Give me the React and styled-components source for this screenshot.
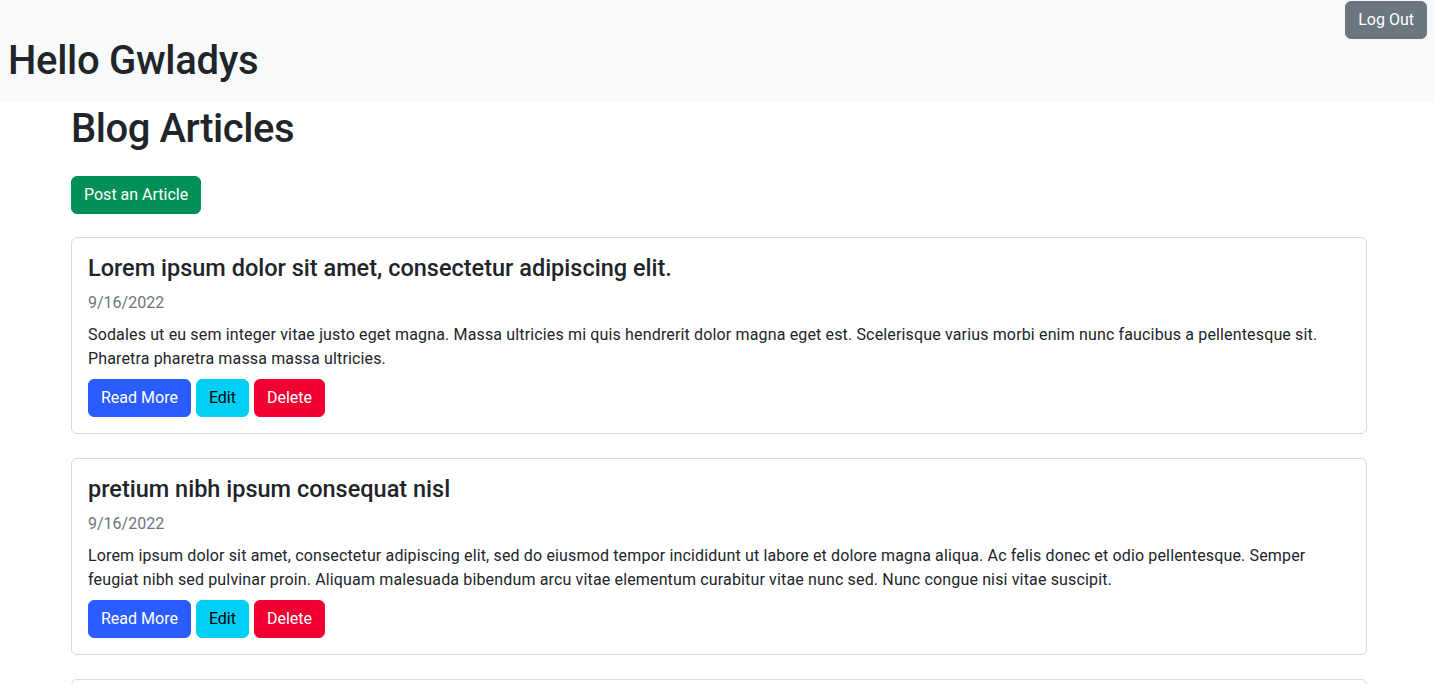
import React from 'react';
import styled, { createGlobalStyle } from 'styled-components';

const GlobalStyle = createGlobalStyle`
  * { box-sizing: border-box; }
  body {
    margin: 0;
    background: #fff;
    color: #212529;
    font-family: Roboto, "Liberation Sans", sans-serif;
    font-size: 16px;
    line-height: 1.5;
  }
`;

const Header = styled.header`
  display: flex;
  flex-direction: column;
  height: 102px;
  background-color: #f8f9fa;
`;

const HeaderBar = styled.div`
  display: flex;
  justify-content: flex-end;
  padding: 1px 7px 0 0;
`;

const Greeting = styled.h1`
  margin: -2px 0 0 8px;
  font-size: 40px;
  font-weight: 500;
  line-height: 1.2;
  letter-spacing: -0.3px;
`;

const Main = styled.main`
  padding: 0 67px 0 71px;
`;

const PageTitle = styled.h1`
  margin: 3px 0 23px;
  font-size: 40px;
  font-weight: 500;
  line-height: 1.2;
  letter-spacing: -0.45px;
`;

const colors = {
  primary: { bg: '#2a5cfe', fg: '#fff' },
  info: { bg: '#00cff5', fg: '#000' },
  danger: { bg: '#f20031', fg: '#fff' },
  success: { bg: '#008f56', fg: '#fff' },
  secondary: { bg: '#6b767f', fg: '#fff' },
};

const Button = styled.button`
  display: inline-block;
  height: 38px;
  padding: 0 12px;
  border: 1px solid ${(p) => colors[p.$variant].bg};
  border-radius: 6px;
  background-color: ${(p) => colors[p.$variant].bg};
  color: ${(p) => colors[p.$variant].fg};
  font-family: inherit;
  font-size: 16px;
  line-height: 24px;
  cursor: pointer;
`;

const CardList = styled.div`
  display: flex;
  flex-direction: column;
  gap: 24px;
  margin-top: 23px;
`;

const Card = styled.article`
  border: 1px solid #d9d9d9;
  border-radius: 6px;
  padding: 16px;
  background: #fff;
`;

const CardTitle = styled.h5`
  margin: 0 0 8px;
  font-size: 23.5px;
  font-weight: 500;
  line-height: 29px;
`;

const CardDate = styled.h6`
  margin: 0 0 8px;
  font-size: 16px;
  font-weight: 400;
  line-height: 24px;
  color: #6c757d;
`;

const CardText = styled.p`
  margin: 0 0 8px;
  font-size: 16px;
  line-height: 24px;
  letter-spacing: 0.15px;
`;

const Actions = styled.div`
  display: flex;
  gap: 5px;
`;

const articles = [
  {
    id: 1,
    title: 'Lorem ipsum dolor sit amet, consectetur adipiscing elit.',
    date: '9/16/2022',
    body: 'Sodales ut eu sem integer vitae justo eget magna. Massa ultricies mi quis hendrerit dolor magna eget est. Scelerisque varius morbi enim nunc faucibus a pellentesque sit. Pharetra pharetra massa massa ultricies.',
  },
  {
    id: 2,
    title: 'pretium nibh ipsum consequat nisl',
    date: '9/16/2022',
    body: 'Lorem ipsum dolor sit amet, consectetur adipiscing elit, sed do eiusmod tempor incididunt ut labore et dolore magna aliqua. Ac felis donec et odio pellentesque. Semper feugiat nibh sed pulvinar proin. Aliquam malesuada bibendum arcu vitae elementum curabitur vitae nunc sed. Nunc congue nisi vitae suscipit.',
  },
  {
    id: 3,
    title: 'Ultrices gravida dictum fusce ut placerat orci nulla',
    date: '9/16/2022',
    body: 'Viverra nam libero justo laoreet sit amet cursus sit amet. Nisl purus in mollis nunc sed id semper risus.',
  },
];

const App = () => {
  return (
    <>
      <GlobalStyle />
      <Header>
        <HeaderBar>
          <Button $variant="secondary">Log Out</Button>
        </HeaderBar>
        <Greeting>Hello Gwladys</Greeting>
      </Header>
      <Main>
        <PageTitle>Blog Articles</PageTitle>
        <Button $variant="success">Post an Article</Button>
        <CardList>
          {articles.map((a) => (
            <Card key={a.id}>
              <CardTitle>{a.title}</CardTitle>
              <CardDate>{a.date}</CardDate>
              <CardText>{a.body}</CardText>
              <Actions>
                <Button $variant="primary">Read More</Button>
                <Button $variant="info">Edit</Button>
                <Button $variant="danger">Delete</Button>
              </Actions>
            </Card>
          ))}
        </CardList>
      </Main>
    </>
  );
};

export default App;
